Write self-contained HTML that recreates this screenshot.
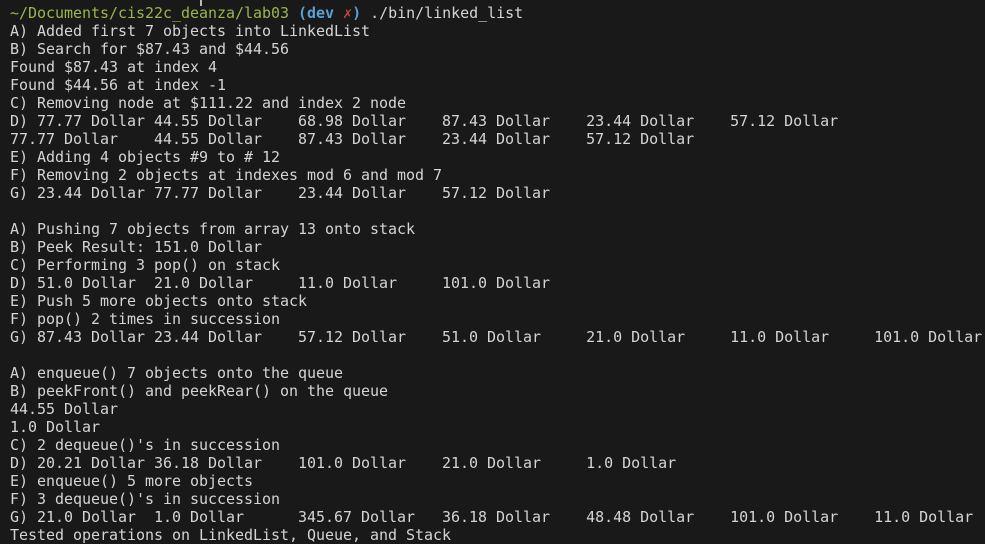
<!DOCTYPE html>
<html><head><meta charset="utf-8"><style>
html,body{margin:0;padding:0;background:#191919;width:985px;height:544px;overflow:hidden}
pre{margin:0;position:absolute;left:10px;top:4px;font-family:"DejaVu Sans Mono","Liberation Mono",monospace;font-size:15px;letter-spacing:-0.03px;line-height:18px;color:#d4d4d4;tab-size:8;-moz-tab-size:8;white-space:pre}
.g{color:#9ab64e}.b{color:#5b9fd3;font-weight:bold}.r{color:#d04040}
.cur{position:absolute;left:200px;top:0;width:2px;height:6px;background:#bbb}
</style></head><body>
<div class="cur"></div>
<pre><span class="g">~/Documents/cis22c_deanza/lab03</span> <span class="b">(dev <span class="r">✗</span>)</span> ./bin/linked_list
A) Added first 7 objects into LinkedList
B) Search for $87.43 and $44.56
Found $87.43 at index 4
Found $44.56 at index -1
C) Removing node at $111.22 and index 2 node
D) 77.77 Dollar 44.55 Dollar	68.98 Dollar	87.43 Dollar	23.44 Dollar	57.12 Dollar
77.77 Dollar	44.55 Dollar	87.43 Dollar	23.44 Dollar	57.12 Dollar
E) Adding 4 objects #9 to # 12
F) Removing 2 objects at indexes mod 6 and mod 7
G) 23.44 Dollar 77.77 Dollar	23.44 Dollar	57.12 Dollar

A) Pushing 7 objects from array 13 onto stack
B) Peek Result: 151.0 Dollar
C) Performing 3 pop() on stack
D) 51.0 Dollar	21.0 Dollar	11.0 Dollar	101.0 Dollar
E) Push 5 more objects onto stack
F) pop() 2 times in succession
G) 87.43 Dollar 23.44 Dollar	57.12 Dollar	51.0 Dollar	21.0 Dollar	11.0 Dollar	101.0 Dollar

A) enqueue() 7 objects onto the queue
B) peekFront() and peekRear() on the queue
44.55 Dollar
1.0 Dollar
C) 2 dequeue()'s in succession
D) 20.21 Dollar 36.18 Dollar	101.0 Dollar	21.0 Dollar	1.0 Dollar
E) enqueue() 5 more objects
F) 3 dequeue()'s in succession
G) 21.0 Dollar	1.0 Dollar	345.67 Dollar	36.18 Dollar	48.48 Dollar	101.0 Dollar	11.0 Dollar
Tested operations on LinkedList, Queue, and Stack</pre>
</body></html>
